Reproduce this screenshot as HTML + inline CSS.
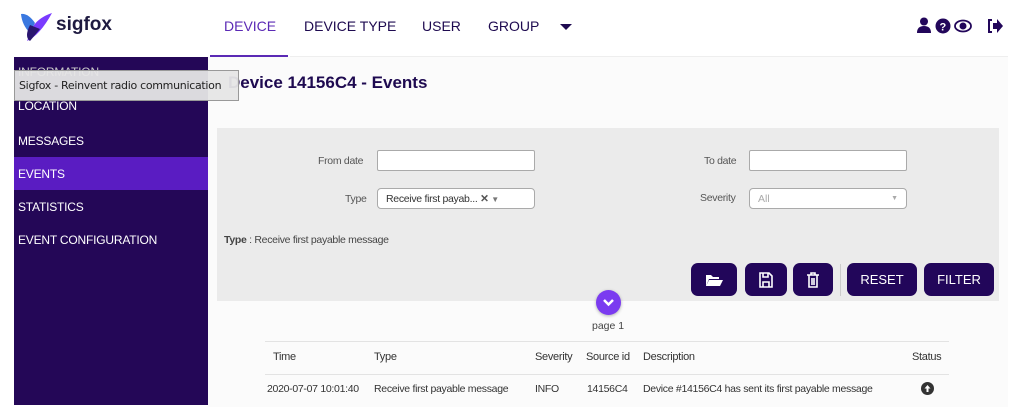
<!DOCTYPE html>
<html><head><style>
*{margin:0;padding:0;box-sizing:border-box}
body{width:1013px;height:417px;overflow:hidden;background:#fff;font-family:"Liberation Sans",sans-serif;position:relative}
.a{position:absolute}
.nav{font-size:14px;color:#1e0a50;top:18px}
.side{left:14px;width:194px;top:57px;height:348px;background:#240757}
.si{position:absolute;left:4px;color:#fff;font-size:12px;letter-spacing:-.2px}
.lbl{font-size:10.5px;color:#555;letter-spacing:-.3px}
.inp{background:#fff;border:1px solid #aaa;border-radius:2px;height:21px;width:158px}
.btn{background:#22065a;border-radius:7px;height:33px;top:263px;color:#fff;font-size:13px;display:flex;align-items:center;justify-content:center}
.th{font-size:11px;color:#333;top:351px;letter-spacing:-.3px}
.td{font-size:10.5px;color:#333;top:383px;letter-spacing:-.3px}
</style></head><body>
<svg class="a" style="left:18px;top:11px" width="36" height="32" viewBox="0 0 36 32"><path d="M3 3 Q10 2 17 12 L12 22 Q4 14 3 3Z" fill="#3a78e0"/><path d="M34 2 Q22 6 16 14 L9 30 Q22 24 34 2Z" fill="#7a3bff"/><path d="M12 14 L22 18 L12 30 Q6 26 12 14Z" fill="#2a1670"/></svg>
<div class="a" style="left:56px;top:14px;font-size:19px;font-weight:bold;color:#1e1a40">sigfox</div>
<div class="a nav" style="left:224px;color:#5b2ab5">DEVICE</div>
<div class="a nav" style="left:304px">DEVICE TYPE</div>
<div class="a nav" style="left:422px">USER</div>
<div class="a nav" style="left:488px">GROUP</div>
<div class="a" style="left:560px;top:24px;width:0;height:0;border-left:6px solid transparent;border-right:6px solid transparent;border-top:6px solid #1e0a50"></div>
<div class="a" style="left:210px;top:55px;width:78px;height:2px;background:#5b2ab5"></div>
<div class="a" style="left:290px;top:56px;width:718px;height:1px;background:#eee"></div>
<svg class="a" style="left:916px;top:16px" width="90" height="20" viewBox="0 0 90 20" fill="#22065a"><circle cx="8" cy="5.5" r="4"/><path d="M1 17 Q1 10 8 10 Q15 10 15 17 Z"/><circle cx="27" cy="10" r="7.5"/><text x="23.5" y="14.5" font-size="11" font-weight="bold" fill="#fff" font-family="Liberation Sans">?</text><ellipse cx="47" cy="10" rx="8" ry="5.5" fill="none" stroke="#22065a" stroke-width="1.8"/><circle cx="47" cy="10" r="3.5"/><path d="M76 4 h-3 v12 h3" fill="none" stroke="#22065a" stroke-width="2"/><path d="M77 7 h4 v-4 l6 7 l-6 7 v-4 h-4 z"/></svg>
<div class="a" style="left:208px;top:57px;width:800px;height:350px;background:#fbfbfb"></div>
<div class="a side"></div>
<div class="a" style="left:14px;top:157px;width:194px;height:33px;background:#5a1cc2"></div>
<div class="si" style="top:65px;left:18px;position:absolute;color:#ccc">INFORMATION</div>
<div class="si" style="top:99px;left:18px">LOCATION</div>
<div class="si" style="top:134px;left:18px">MESSAGES</div>
<div class="si" style="top:167px;left:18px">EVENTS</div>
<div class="si" style="top:200px;left:18px">STATISTICS</div>
<div class="si" style="top:233px;left:18px">EVENT CONFIGURATION</div>
<div class="a" style="left:228px;top:73px;font-size:17px;font-weight:bold;color:#1e0a50">Device 14156C4 - Events</div>
<div class="a" style="left:14px;top:70px;width:225px;height:31px;background:rgba(230,230,230,.95);border:1px solid #999;font-size:11px;color:#222;padding:8px 4px;font-family:'DejaVu Sans',sans-serif;letter-spacing:-.3px;white-space:nowrap;overflow:hidden">Sigfox - Reinvent radio communication</div>
<div class="a" style="left:217px;top:128px;width:782px;height:173px;background:#ebebeb"></div>
<div class="a lbl" style="left:318px;top:155px">From date</div>
<div class="a inp" style="left:377px;top:150px"></div>
<div class="a lbl" style="left:704px;top:155px">To date</div>
<div class="a inp" style="left:749px;top:150px"></div>
<div class="a lbl" style="left:345px;top:193px">Type</div>
<div class="a inp" style="left:377px;top:188px;border-radius:4px;font-size:10.5px;color:#333;padding:4px 8px;letter-spacing:-.3px">Receive first payab... <b style="color:#555">✕</b> <span style="font-size:8px;color:#777">▼</span></div>
<div class="a lbl" style="left:700px;top:192px">Severity</div>
<div class="a inp" style="left:749px;top:188px;border-radius:4px;font-size:10.5px;color:#aaa;padding:4px 8px">All<span style="position:absolute;right:8px;top:6px;font-size:7px">▼</span></div>
<div class="a lbl" style="left:224px;top:234px;color:#444"><b>Type</b> : Receive first payable message</div>
<div class="a btn" style="left:691px;width:46px"><svg width="18" height="14" viewBox="0 0 18 14" fill="#fff"><path d="M1 2h5l2 2h6v2H4L1 13z M4 7h14l-3 6H1z"/></svg></div>
<div class="a btn" style="left:745px;width:42px"><svg width="14" height="16" viewBox="0 0 14 16" fill="none" stroke="#fff" stroke-width="1.6"><path d="M1 1h9l3 3v11H1z M4 1v4h5V1 M4 15v-5h6v5"/></svg></div>
<div class="a btn" style="left:793px;width:40px"><svg width="12" height="16" viewBox="0 0 12 16" fill="none" stroke="#fff" stroke-width="1.6"><path d="M0 3h12 M4 3V1h4v2 M2 3v12h8V3 M5 6v7 M7 6v7"/></svg></div>
<div class="a" style="left:840px;top:264px;width:1px;height:32px;background:#ccc"></div>
<div class="a btn" style="left:847px;width:70px">RESET</div>
<div class="a btn" style="left:924px;width:70px">FILTER</div>
<div class="a" style="left:596px;top:290px;width:25px;height:25px;border-radius:50%;background:#7b3bf0;box-shadow:0 1px 3px rgba(0,0,0,.3)"><svg width="25" height="25" viewBox="0 0 25 25"><path d="M8 10l4.5 4.5L17 10" fill="none" stroke="#fff" stroke-width="2.5"/></svg></div>
<div class="a" style="left:592px;top:320px;font-size:10.5px;color:#444">page 1</div>
<div class="a" style="left:265px;top:341px;width:684px;height:1px;background:#e3e3e3"></div>
<div class="a" style="left:265px;top:374px;width:684px;height:1px;background:#e3e3e3"></div>
<div class="a th" style="left:273px">Time</div>
<div class="a th" style="left:374px">Type</div>
<div class="a th" style="left:535px">Severity</div>
<div class="a th" style="left:586px">Source id</div>
<div class="a th" style="left:643px">Description</div>
<div class="a th" style="left:912px">Status</div>
<div class="a td" style="left:267px">2020-07-07 10:01:40</div>
<div class="a td" style="left:374px">Receive first payable message</div>
<div class="a td" style="left:535px">INFO</div>
<div class="a td" style="left:587px">14156C4</div>
<div class="a td" style="left:643px">Device #14156C4 has sent its first payable message</div>
<div class="a" style="left:921px;top:382px;width:13px;height:13px;border-radius:50%;background:#333"><svg width="13" height="13" viewBox="0 0 13 13"><path d="M6.5 3L3.5 6.5h2V10h2V6.5h2z" fill="#fff"/></svg></div>
</body></html>
